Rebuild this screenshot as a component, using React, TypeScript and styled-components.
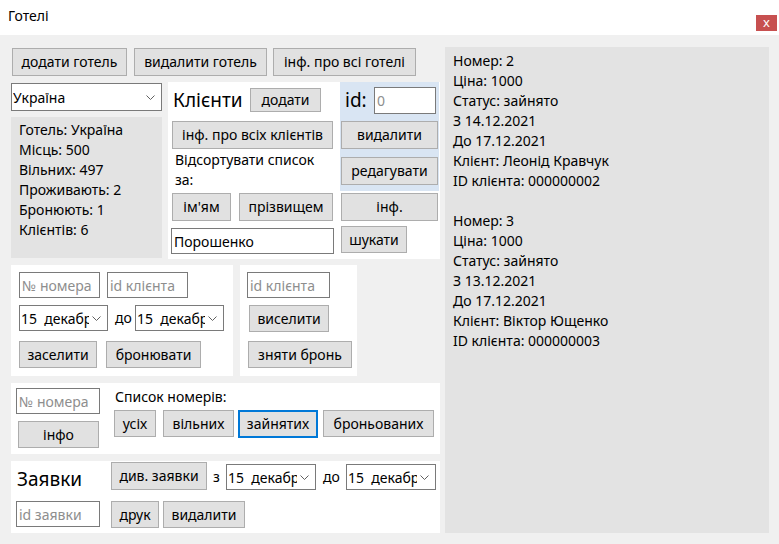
import React from "react";
import styled, { createGlobalStyle, css } from "styled-components";

const GlobalStyle = createGlobalStyle`
  html, body {
    margin: 0;
    padding: 0;
    background: #f0f0f0;
  }
  body {
    font-family: "Noto Sans", "Open Sans", sans-serif;
    font-size: 14px;
    color: #000;
  }
  * {
    box-sizing: border-box;
  }
`;

const Window = styled.div`
  width: 779px;
  height: 544px;
  display: flex;
  flex-direction: column;
  background: #f0f0f0;
  overflow: hidden;
`;

const TitleBar = styled.div`
  height: 35px;
  flex: none;
  background: #fff;
  display: flex;
  justify-content: space-between;
  align-items: flex-start;
  padding: 0 2px 0 8px;
`;

const Title = styled.span`
  margin-top: 6px;
  line-height: 20px;
`;

const CloseButton = styled.div`
  margin-top: 15px;
  width: 21px;
  height: 16px;
  background: #c75050;
  color: #fff;
  font-size: 13px;
  line-height: 15px;
  text-align: center;
`;

const Body = styled.div`
  flex: 1;
  display: flex;
  gap: 5px;
  padding: 12px 10px 11px 11px;
`;

const LeftColumn = styled.div`
  width: 429px;
  display: flex;
  flex-direction: column;
`;

const Row = styled.div<{ $mt?: number; $ml?: number; $gap?: number; $h?: number; $align?: string }>`
  display: flex;
  align-items: ${(p) => p.$align ?? "flex-start"};
  gap: ${(p) => p.$gap ?? 0}px;
  margin-top: ${(p) => p.$mt ?? 0}px;
  margin-left: ${(p) => p.$ml ?? 0}px;
  ${(p) => p.$h !== undefined && css`height: ${p.$h}px;`}
  flex: none;
`;

const Column = styled.div<{ $w?: number; $ml?: number }>`
  display: flex;
  flex-direction: column;
  ${(p) => p.$w !== undefined && css`width: ${p.$w}px;`}
  margin-left: ${(p) => p.$ml ?? 0}px;
  flex: none;
`;

const Panel = styled.div<{ $w: number; $h: number; $pad?: string; $row?: boolean }>`
  width: ${(p) => p.$w}px;
  height: ${(p) => p.$h}px;
  background: #fff;
  padding: ${(p) => p.$pad ?? "0"};
  display: flex;
  flex-direction: ${(p) => (p.$row ? "row" : "column")};
  flex: none;
`;

const InfoBox = styled.div<{ $h: number; $mt?: number; $pt?: number }>`
  background: #e3e3e3;
  height: ${(p) => p.$h}px;
  margin-top: ${(p) => p.$mt ?? 0}px;
  padding: ${(p) => p.$pt ?? 3}px 8px 0 8px;
  line-height: 20px;
  white-space: pre;
`;

const RightPanel = styled(InfoBox)`
  flex: 1;
`;

const Button = styled.button<{ $w: number; $h?: number; $mt?: number; $ml?: number; $focused?: boolean }>`
  width: ${(p) => p.$w}px;
  height: ${(p) => p.$h ?? 28}px;
  margin: ${(p) => p.$mt ?? 0}px 0 0 ${(p) => p.$ml ?? 0}px;
  padding: 0;
  flex: none;
  background: #e1e1e1;
  border: 1px solid #adadad;
  border-radius: 0;
  font: inherit;
  color: #000;
  line-height: 1;
  white-space: nowrap;
  ${(p) =>
    p.$focused &&
    css`
      border: 2px solid #0078d7;
    `}
`;

const TextBox = styled.input<{ $w: number; $h?: number; $mt?: number; $ml?: number }>`
  width: ${(p) => p.$w}px;
  height: ${(p) => p.$h ?? 26}px;
  margin: ${(p) => p.$mt ?? 0}px 0 0 ${(p) => p.$ml ?? 0}px;
  flex: none;
  border: 1px solid #7a7a7a;
  border-radius: 0;
  padding: 0 0 0 2px;
  font: inherit;
  color: #000;
  background: #fff;
  outline: none;
  &::placeholder {
    color: #8e8e8e;
  }
`;

const Select = styled.div<{ $w: number; $h?: number; $mt?: number; $ml?: number }>`
  width: ${(p) => p.$w}px;
  height: ${(p) => p.$h ?? 26}px;
  margin: ${(p) => p.$mt ?? 0}px 0 0 ${(p) => p.$ml ?? 0}px;
  flex: none;
  border: 1px solid #7a7a7a;
  background: #fff;
  display: flex;
  align-items: center;
  padding: 0 6px 0 1px;
  gap: 3px;
`;

const SelectText = styled.span`
  flex: 1;
  overflow: hidden;
  white-space: nowrap;
`;

const BigLabel = styled.span<{ $w?: number; $pl?: number; $mt?: number; $lh?: number }>`
  font-size: 19px;
  ${(p) => p.$w !== undefined && css`width: ${p.$w}px;`}
  padding-left: ${(p) => p.$pl ?? 0}px;
  margin-top: ${(p) => p.$mt ?? 0}px;
  ${(p) => p.$lh !== undefined && css`line-height: ${p.$lh}px;`}
  flex: none;
`;

const Label = styled.span<{ $w?: number; $pl?: number; $mt?: number }>`
  ${(p) => p.$w !== undefined && css`width: ${p.$w}px;`}
  padding-left: ${(p) => p.$pl ?? 0}px;
  margin-top: ${(p) => p.$mt ?? 0}px;
  line-height: 20px;
  flex: none;
`;

const BlueBox = styled.div`
  width: 99px;
  height: 109px;
  background: #d9e5f3;
  padding: 0 1px;
  display: flex;
  flex-direction: column;
`;

const Chevron = () => (
  <svg width="9" height="5" viewBox="0 0 9 5" style={{ flex: "none" }}>
    <polyline points="0.5,0.5 4.5,4.5 8.5,0.5" fill="none" stroke="#606060" strokeWidth="1" />
  </svg>
);

const DatePicker: React.FC<{ w: number; mt?: number; ml?: number }> = ({ w, mt, ml }) => (
  <Select $w={w} $mt={mt} $ml={ml}>
    <SelectText>15 &nbsp;декабря 2021 г.</SelectText>
    <Chevron />
  </Select>
);

const roomInfo = `Номер: 2
Ціна: 1000
Статус: зайнято
З 14.12.2021
До 17.12.2021
Клієнт: Леонід Кравчук
ID клієнта: 000000002

Номер: 3
Ціна: 1000
Статус: зайнято
З 13.12.2021
До 17.12.2021
Клієнт: Віктор Ющенко
ID клієнта: 000000003`;

const hotelInfo = `Готель: Україна
Місць: 500
Вільних: 497
Проживають: 2
Бронюють: 1
Клієнтів: 6`;

const App: React.FC = () => {
  return (
    <Window>
      <GlobalStyle />
      <TitleBar>
        <Title>Готелі</Title>
        <CloseButton>x</CloseButton>
      </TitleBar>
      <Body>
        <LeftColumn>
          <Row $h={29}>
            <Button $w={115} $mt={1} $ml={1}>додати готель</Button>
            <Button $w={133} $mt={1} $ml={7}>видалити готель</Button>
            <Button $w={143} $mt={1} $ml={6}>інф. про всі готелі</Button>
          </Row>

          <Row $mt={6} $gap={6} $h={177}>
            <Column $w={151}>
              <Select $w={151} $h={28} $mt={1}>
                <SelectText>Україна</SelectText>
                <Chevron />
              </Select>
              <InfoBox $h={141} $mt={6}>{hotelInfo}</InfoBox>
            </Column>
            <Panel $w={272} $h={177} $row>
              <Column $w={172}>
                <Row $h={36} $align="center">
                  <BigLabel $w={82} $pl={5}>Клієнти</BigLabel>
                  <Button $w={71} $h={24}>додати</Button>
                </Row>
                <Button $w={161} $mt={3} $ml={4}>інф. про всіх клієнтів</Button>
                <Label $pl={7} $mt={1}>
                  Відсортувати список
                  <br />
                  за:
                </Label>
                <Row $mt={3} $ml={4} $gap={8}>
                  <Button $w={59}>ім'ям</Button>
                  <Button $w={94}>прізвищем</Button>
                </Row>
                <TextBox $w={163} $mt={7} $ml={3} defaultValue="Порошенко" />
              </Column>
              <Column $w={100}>
                <BlueBox>
                  <Row $h={36} $align="center">
                    <BigLabel $w={33} $pl={4}>id:</BigLabel>
                    <TextBox $w={62} $h={27} placeholder="0" />
                  </Row>
                  <Button $w={97} $mt={3}>видалити</Button>
                  <Button $w={97} $mt={8}>редагувати</Button>
                </BlueBox>
                <Button $w={97} $mt={2} $ml={1}>інф.</Button>
                <Button $w={66} $h={27} $mt={5} $ml={1}>шукати</Button>
              </Column>
            </Panel>
          </Row>

          <Row $mt={6} $gap={7} $h={111}>
            <Panel $w={222} $h={111} $pad="7px 0 0 8px">
              <Row $gap={7}>
                <TextBox $w={81} placeholder="№ номера" />
                <TextBox $w={81} placeholder="id клієнта" />
              </Row>
              <Row $mt={7} $align="center">
                <DatePicker w={89} />
                <Label $w={27} $pl={7}>до</Label>
                <DatePicker w={89} />
              </Row>
              <Row $mt={10} $gap={9}>
                <Button $w={78} $h={27}>заселити</Button>
                <Button $w={95} $h={27}>бронювати</Button>
              </Row>
            </Panel>
            <Panel $w={117} $h={111} $pad="7px 0 0 7px">
              <TextBox $w={83} placeholder="id клієнта" />
              <Button $w={80} $h={27} $mt={7} $ml={2}>виселити</Button>
              <Button $w={104} $h={27} $mt={9} $ml={1}>зняти бронь</Button>
            </Panel>
          </Row>

          <Row $mt={7}>
            <Panel $w={429} $h={71} $pad="5px 0 0 5px" $row>
              <Column $w={84}>
                <TextBox $w={84} placeholder="№ номера" />
                <Button $w={81} $h={27} $mt={7} $ml={2}>інфо</Button>
              </Column>
              <Column $ml={14}>
                <Label $pl={1} $mt={-1}>Список номерів:</Label>
                <Row $mt={3}>
                  <Button $w={42} $h={27}>усіх</Button>
                  <Button $w={71} $h={27} $ml={7}>вільних</Button>
                  <Button $w={80} $h={28} $ml={4} $focused>зайнятих</Button>
                  <Button $w={111} $h={27} $ml={5}>броньованих</Button>
                </Row>
              </Column>
            </Panel>
          </Row>

          <Row $mt={7}>
            <Panel $w={429} $h={72} $pad="1px 0 0 5px">
              <Row>
                <BigLabel $w={95} $pl={1} $mt={3} $lh={28}>Заявки</BigLabel>
                <Button $w={96}>див. заявки</Button>
                <Label $w={19} $pl={6} $mt={5}>з</Label>
                <DatePicker w={90} mt={2} />
                <Label $w={30} $pl={7} $mt={5}>до</Label>
                <DatePicker w={90} mt={2} />
              </Row>
              <Row $mt={8}>
                <TextBox $w={84} placeholder="id заявки" />
                <Button $w={48} $h={27} $ml={11}>друк</Button>
                <Button $w={82} $h={27} $ml={4}>видалити</Button>
              </Row>
            </Panel>
          </Row>
        </LeftColumn>
        <RightPanel $h={486} $pt={4}>{roomInfo}</RightPanel>
      </Body>
    </Window>
  );
};

export default App;
